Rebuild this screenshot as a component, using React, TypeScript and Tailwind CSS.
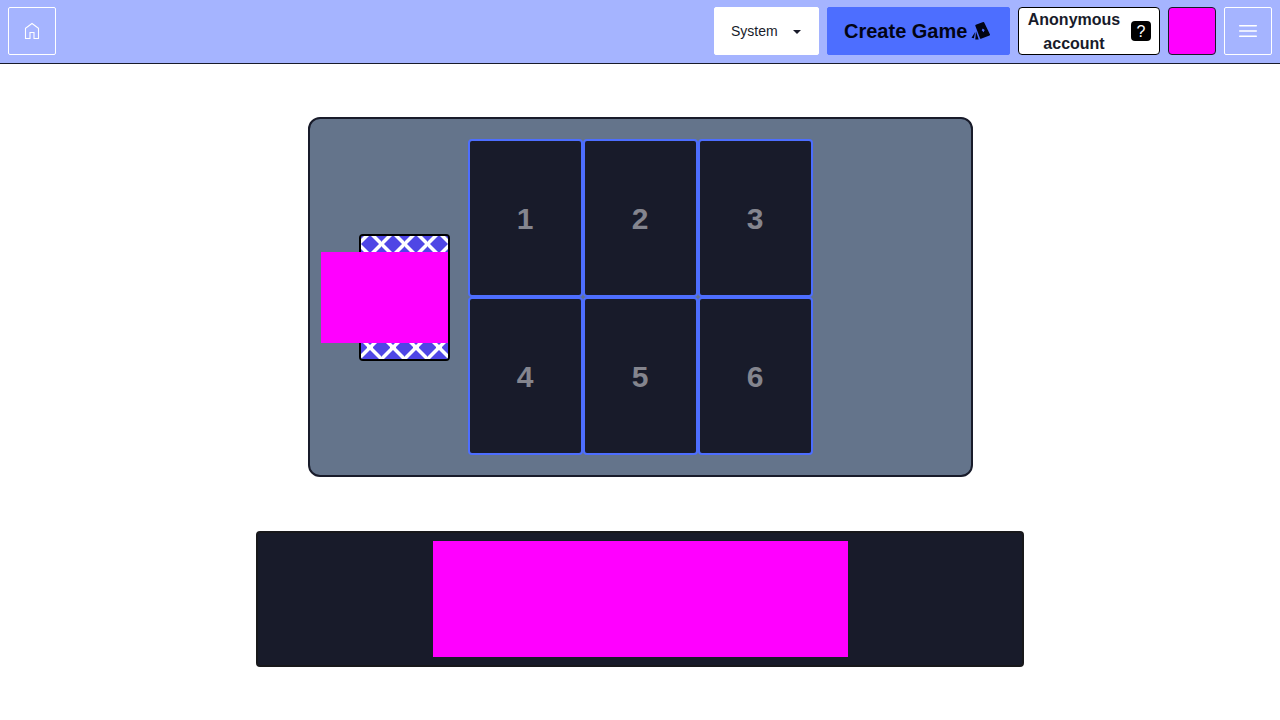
import React from "react";

const slots = [1, 2, 3, 4, 5, 6];

function HomeIcon() {
  return (
    <svg className="size-6" viewBox="0 0 24 24" fill="none" stroke="currentColor" aria-hidden="true">
      <path d="M10 19.500H5.500V9.300L12 4.500l6.500 4.800v10.200H14v-6h-4v6z" strokeWidth="1.100" />
    </svg>
  );
}

function CardsIcon() {
  return (
    <svg className="size-5" viewBox="0 0 20 20" fill="currentColor" aria-hidden="true">
      <path
        fillRule="evenodd"
        d="M4.800 3.800 12.200 1.100a.8.800 0 0 1 1 .4L19 13.600a.8.800 0 0 1-.5 1L10 17.800a.8.800 0 0 1-1-.5L4.300 4.800a.8.800 0 0 1 .5-1zM11.800 7.400l-1.100 1.900 1.900 1.900 1.100-2.200z"
      />
      <path d="M5 10.500 7.700 18.500H4.300z" />
      <path d="M4.200 11 2.900 17.200.5 16.800z" />
    </svg>
  );
}

function MenuIcon() {
  return (
    <svg className="size-6" viewBox="0 0 24 24" fill="none" stroke="currentColor" aria-hidden="true">
      <path d="M3.750 6.750h16.500M3.750 12h16.500M3.750 17.250h16.500" strokeWidth="1.600" strokeLinecap="round" />
    </svg>
  );
}

function CardBack() {
  return (
    <svg className="block h-full w-full rounded-xs" shapeRendering="crispEdges" aria-hidden="true">
      <defs>
        <pattern id="lattice" x="9" y="-3.5" width="23" height="23" patternUnits="userSpaceOnUse">
          <rect width="23" height="23" fill="#4f46e5" />
          <path d="M-2-2 25 25M25-2-2 25" stroke="#fff" strokeWidth="2.900" />
        </pattern>
      </defs>
      <rect width="100%" height="100%" fill="url(#lattice)" />
    </svg>
  );
}

function Header() {
  return (
    <header className="flex shrink-0 items-center justify-between border-b border-[#181b2a] bg-[#a5b4ff] px-2 pt-[7px] pb-2">
      <a href="#" aria-label="Home" className="flex size-12 items-center justify-center rounded-xs border border-white text-white">
        <HomeIcon />
      </a>
      <div className="flex items-center gap-2">
        <div className="relative">
          <select
            aria-label="Theme"
            defaultValue="System"
            className="block h-12 w-[105px] appearance-none rounded-xs border border-white bg-white pr-8 pl-4 text-sm text-[#181b2a]"
          >
            <option>System</option>
            <option>Light</option>
            <option>Dark</option>
          </select>
          <svg className="pointer-events-none absolute top-[23px] right-[18px] h-1 w-2" viewBox="0 0 8 4" fill="#181b2a" aria-hidden="true">
            <path d="M0 0h8L4 4z" />
          </svg>
        </div>
        <button className="flex h-12 w-[183px] items-center gap-1 rounded-xs border border-[#4d6eff] bg-[#4d6eff] pl-4 text-xl font-bold whitespace-nowrap text-[#020414]">
          <span>Create Game</span>
          <CardsIcon />
        </button>
        <button className="flex h-12 w-[142px] items-center justify-between rounded-sm border border-black bg-white px-2 font-bold text-[#181b2a]">
          <span className="w-[94px] pt-0.5 text-center leading-6">Anonymous account</span>
          <span className="flex size-5 items-center justify-center rounded-sm bg-black pt-0.5 text-base font-normal text-white">?</span>
        </button>
        <button aria-label="Profile" className="size-12 rounded-sm border border-[#181b2a] bg-[#ff00ff]" />
        <button aria-label="Menu" className="flex size-12 items-center justify-center rounded-xs border border-white text-white">
          <MenuIcon />
        </button>
      </div>
    </header>
  );
}

export default function App() {
  return (
    <div className="flex min-h-screen flex-col bg-white font-['Liberation_Sans',Arial,sans-serif]">
      <Header />
      <main className="flex flex-1 flex-col items-center justify-evenly">
        <section aria-label="Board" className="grid grid-cols-[158px_auto_158px] items-center rounded-xl border-2 border-[#181b2a] bg-[#64748b] py-5">
          <div className="relative mr-[18px] h-[127px] w-[91px] justify-self-end rounded-sm border-2 border-black">
            <CardBack />
            <div className="absolute top-4 right-0 h-[91px] w-[127px] bg-[#ff00ff]" />
          </div>
          <div className="grid grid-cols-3">
            {slots.map((n) => (
              <div
                key={n}
                className="flex h-[158px] w-[115px] items-center justify-center rounded-sm border-2 border-[#4d6eff] bg-[#181b2a] pt-0.5 text-3xl font-bold text-[#84858e]"
              >
                {n}
              </div>
            ))}
          </div>
        </section>
        <section aria-label="Hand" className="flex w-3/5 justify-center rounded-sm border-2 border-[#18181b] bg-[#181b2a] p-2">
          <div className="h-[116px] w-[415px] bg-[#ff00ff]" />
        </section>
      </main>
    </div>
  );
}
